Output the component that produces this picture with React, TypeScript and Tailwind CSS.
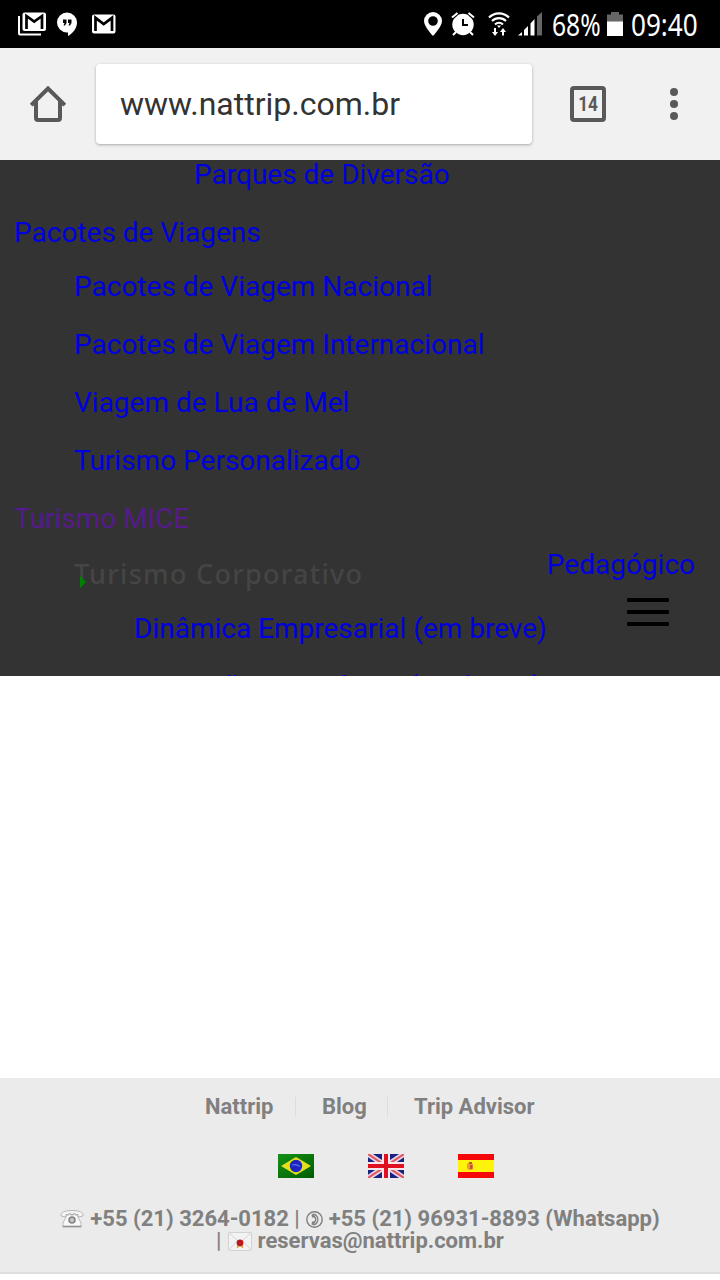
import React from 'react';

interface MenuRow {
  label: string;
  className: string;
}

const menuRows: MenuRow[] = [
  { label: 'Parques de Diversão', className: 'pl-[194px] h-[58px] -mt-[14px]' },
  { label: 'Pacotes de Viagens', className: 'pl-[14px] h-[58px]' },
  { label: 'Pacotes de Viagem Nacional', className: 'pl-[74px] h-[58px] -mt-1' },
  { label: 'Pacotes de Viagem Internacional', className: 'pl-[74px] h-[58px]' },
  { label: 'Viagem de Lua de Mel', className: 'pl-[74px] h-[58px]' },
  { label: 'Turismo Personalizado', className: 'pl-[74px] h-[58px]' },
  { label: 'Turismo MICE', className: 'pl-[14px] h-[58px] text-[#551a8b]' },
];

const StackedMailIcon = () => (
  <svg className="w-7 h-6" viewBox="0 0 28 24" fill="none">
    <path d="M1 4v17.500a1 1 0 0 0 1 1h21" stroke="#fff" strokeWidth="2" />
    <rect x="4.500" y=".5" width="23.500" height="18.500" rx="2" fill="#fff" />
    <path d="M8.500 17V4l7.700 5.500L24 4v13" stroke="#000" strokeWidth="2.700" />
  </svg>
);

const HangoutsIcon = () => (
  <svg className="w-5 h-6" viewBox="0 0 20 24">
    <path d="M10 .5a10 10 0 0 0 0 20h1V24c5-2.500 9-8 9-13.500A10 10 0 0 0 10 .5z" fill="#fff" />
    <path d="M6 7.500h3.500V11L8 13.500H6.500l1-2.500H6zM11 7.500h3.500V11L13 13.500h-1.500l1-2.500H11z" fill="#000" />
  </svg>
);

const MailIcon = () => (
  <svg className="w-6 h-5" viewBox="0 0 24 20" fill="none">
    <rect y=".5" width="23.500" height="19" rx="2" fill="#fff" />
    <path d="M3.500 17V3.800L11.700 10 20 3.800V17" stroke="#000" strokeWidth="2.700" />
  </svg>
);

const PinIcon = () => (
  <svg className="w-[18px] h-6" viewBox="0 0 18 24">
    <path fillRule="evenodd" d="M9 0a9 9 0 0 0-9 9c0 5.500 9 15 9 15s9-9.500 9-15a9 9 0 0 0-9-9zm0 4.200a4.800 4.800 0 1 1 0 9.600 4.800 4.800 0 0 1 0-9.600z" fill="#fff" />
  </svg>
);

const AlarmIcon = () => (
  <svg className="w-6 h-6" viewBox="0 0 24 24" fill="none">
    <circle cx="12" cy="12.500" r="10.700" fill="#fff" />
    <path d="M1 5.500l5.500-4.500M23 5.500L17.500 1M5 20l-3 3M19 20l3 3" stroke="#fff" strokeWidth="2" />
    <path d="M6.500 3.200L3 6M17.500 3.200L21 6" stroke="#000" strokeWidth="1" />
    <path d="M12 7v6h5" stroke="#000" strokeWidth="2" />
  </svg>
);

const WifiIcon = () => (
  <svg className="w-[22px] h-6" viewBox="0 0 22 24" fill="none">
    <path d="M1 5.500a14 14 0 0 1 20 0M4 9a10 10 0 0 1 14 0M7 12.500a6 6 0 0 1 8 0" stroke="#fff" strokeWidth="2.200" />
    <path d="M9 13.500h4L11 16zM6 16h2v4h2l-3 4-3-4h2zM14 23.500h2V20h2l-3-4-3 4h2z" fill="#fff" />
  </svg>
);

const SignalIcon = () => (
  <svg className="w-6 h-6" viewBox="0 0 24 24" fill="#fff">
    <path d="M0 23.500L4 20v3.500zM6 18l4-4v9.500H6zM12.500 11.500l4-4.500v16.500h-4z" />
    <path d="M19 4.500L24 0v23.500h-5z" fill="#666" />
  </svg>
);

const BatteryIcon = () => (
  <svg className="w-4 h-6" viewBox="0 0 16 24">
    <path d="M0 2.500h4V0h8v2.500h4V10H0z" fill="#666" />
    <path d="M0 9.500h16V24H0z" fill="#fff" />
  </svg>
);

const HomeIcon = () => (
  <svg className="w-9 h-9" viewBox="0 0 36 36" fill="none" stroke="#595959" strokeWidth="4">
    <path d="M1.200 19.200L18 2.500l16.800 16.700M6 15v17a2 2 0 0 0 2 2h20a2 2 0 0 0 2-2V15" />
  </svg>
);

const BrazilFlag = () => (
  <svg className="w-9 h-6" viewBox="0 0 36 24">
    <defs>
      <linearGradient id="br" x1="0" y1="0" x2="1" y2="1">
        <stop offset="0" stopColor="#169116" />
        <stop offset="1" stopColor="#005c00" />
      </linearGradient>
    </defs>
    <rect width="36" height="24" fill="url(#br)" />
    <path d="M3 12L18 3l15 9-15 9z" fill="#e6e01a" />
    <circle cx="18" cy="12" r="6.200" fill="#1c25c4" />
    <path d="M14 11c3-1 6 0 8 1.500" stroke="#5a76dc" strokeWidth="1.200" fill="none" />
  </svg>
);

const UkFlag = () => (
  <svg className="w-9 h-6" viewBox="0 0 36 24">
    <rect width="36" height="24" fill="#172283" />
    <path d="M0 0l36 24M36 0L0 24" stroke="#e9d5e2" strokeWidth="5.500" />
    <path d="M0 0l36 24M36 0L0 24" stroke="#e05461" strokeWidth="2" />
    <path d="M18 0v24M0 12h36" stroke="#f7e6ea" strokeWidth="8" />
    <path d="M18 0v24M0 12h36" stroke="#e01020" strokeWidth="4" />
  </svg>
);

const SpainFlag = () => (
  <svg className="w-9 h-6" viewBox="0 0 36 24">
    <rect width="36" height="24" fill="#f60808" />
    <rect y="6" width="36" height="12" fill="#fff30c" />
    <rect x="9" y="8.500" width="6" height="7.500" rx="2.500" fill="#eb9a36" />
    <path d="M11 8h3v2h-3zM12 11h2.500v4H12z" fill="#c0552a" />
  </svg>
);

const PhoneIcon = () => (
  <svg className="w-6 h-[18px]" viewBox="0 0 24 18">
    <path d="M1 6V4c1-2 5-3.500 11-3.500S22 2 23 4v2l-5 1V4.500H6V7z" fill="#f4f4f4" stroke="#aaa" strokeWidth=".8" />
    <path d="M7 5h2V3.500h1.500V5h3V3.500H15V5h2l4 8v3H3v-3z" fill="#f8f8f8" stroke="#aaa" strokeWidth=".8" />
    <path d="M2.500 16.700h19" stroke="#888" strokeWidth="1.200" />
    <circle cx="12" cy="10" r="3.800" fill="#888" />
    <circle cx="12" cy="10" r="2" fill="#ccc" />
  </svg>
);

const DialIcon = () => (
  <svg className="w-[17px] h-[17px]" viewBox="0 0 17 17">
    <circle cx="8.500" cy="8.500" r="7.700" fill="none" stroke="#808080" strokeWidth="1.400" />
    <path d="M5.500 3.500L8 2.500c6 1 6 11 0 12l-2.500-1 .5-3h1.500c2-.5 2-3.500 0-4H6z" fill="#808080" />
    <path d="M8.500 4.500c3 1.500 3 6.500 0 8" fill="none" stroke="#ebebeb" strokeWidth="1" />
  </svg>
);

const EnvelopeIcon = () => (
  <svg className="w-6 h-[19px]" viewBox="0 0 24 19">
    <rect x=".5" y=".5" width="23" height="18" rx="1" fill="#f3f3f3" stroke="#d2d2d2" />
    <path d="M1 1l11 9.500L23 1M1 18l8-9M23 18l-8-9" fill="none" stroke="#d4d4d4" />
    <path d="M9.500 12l-1 4 2-.5L12 14l1.500 1.500 2 .5-1-4z" fill="#e9a33a" />
    <circle cx="12" cy="10.800" r="3.400" fill="#bd1720" />
  </svg>
);

const App: React.FC = () => {
  return (
    <div className="w-[720px] h-[1280px] bg-white flex flex-col overflow-hidden font-['Roboto',sans-serif]">
      <div className="h-12 shrink-0 bg-black flex items-center text-white pl-[18px] pr-[21px]">
        <StackedMailIcon />
        <div className="ml-[11px]"><HangoutsIcon /></div>
        <div className="ml-[15px]"><MailIcon /></div>
        <div className="ml-auto flex items-center">
          <PinIcon />
          <div className="ml-[9px]"><AlarmIcon /></div>
          <div className="ml-[13px]"><WifiIcon /></div>
          <div className="ml-[8px]"><SignalIcon /></div>
          <span className="w-[49px] ml-[10px] pt-[2px] flex whitespace-nowrap font-['Noto_Sans'] text-[30px] leading-[46px]"><span className="origin-left scale-x-[0.82]">68%</span></span>
          <div className="ml-[6px]"><BatteryIcon /></div>
          <span className="w-[68px] ml-[8px] pt-[2px] flex whitespace-nowrap font-['Noto_Sans'] text-[30px] leading-[46px]"><span className="origin-left scale-x-[0.87]">09:40</span></span>
        </div>
      </div>

      <header className="h-28 shrink-0 bg-[#f1f1f1] flex items-center pl-[30px]">
        <HomeIcon />
        <div className="ml-[30px] w-[436px] h-20 bg-white rounded-[4px] shadow-[0_1px_3px_rgba(0,0,0,0.3)] flex items-center pl-6 text-[32px] text-[#333]">www.nattrip.com.br</div>
        <div className="ml-[38px] w-9 h-9 rounded-[4px] border-4 border-[#595959] text-[#595959] font-bold text-[21px] leading-none flex items-center justify-center"><span className="scale-x-[0.82]">14</span></div>
        <div className="ml-[64px] flex flex-col gap-1">
          <span className="w-2 h-2 rounded-full bg-[#595959]" />
          <span className="w-2 h-2 rounded-full bg-[#595959]" />
          <span className="w-2 h-2 rounded-full bg-[#595959]" />
        </div>
      </header>

      <nav className="relative h-[516px] shrink-0 bg-[#333] overflow-hidden text-[28px] text-[#0000dc] flex flex-col">
        {menuRows.map(row => (
          <a key={row.label} className={`shrink-0 flex items-center whitespace-nowrap ${row.className}`}>{row.label}</a>
        ))}
        <div className="relative h-[52px] shrink-0 pl-[74px] flex items-center font-['Noto_Sans'] font-medium text-[27px] tracking-[1.3px] text-[#454545]">
          Turismo Corporativo
          <svg className="absolute left-20 top-[28px] w-[6px] h-3" viewBox="0 0 6 12"><path d="M0 0l6 6-6 6z" fill="#008000" /></svg>
        </div>
        <a className="h-[58px] shrink-0 pl-[134px] flex items-center whitespace-nowrap">Dinâmica Empresarial (em breve)</a>
        <a className="h-[58px] shrink-0 pl-[128px] flex items-center whitespace-nowrap">Formação Estratégica (em breve)</a>

        <a className="absolute right-[25px] top-[376px] h-[58px] flex items-center">Pedagógico</a>
        <div className="absolute left-[627px] top-[438px] w-[42px] flex flex-col gap-2">
          <span className="h-1 rounded-[1px] bg-black" />
          <span className="h-1 rounded-[1px] bg-black" />
          <span className="h-1 rounded-[1px] bg-black" />
        </div>
      </nav>

      <main className="h-[402px] shrink-0 bg-white" />

      <footer className="h-[196px] shrink-0 bg-[#ebebeb] border-b-2 border-[#dedede] text-[22px] leading-[22px] font-bold text-[#808080]">
        <div className="flex items-center pl-[205px] pt-[18px]">
          <a className="w-[69px]">Nattrip</a>
          <span className="w-px h-5 bg-[#dcdcdc] ml-[21px] mr-[26px]" />
          <a className="w-[45px]">Blog</a>
          <span className="w-px h-5 bg-[#dcdcdc] ml-[20px] mr-[26px]" />
          <a>Trip Advisor</a>
        </div>
        <div className="flex gap-[54px] pl-[278px] mt-9">
          <BrazilFlag />
          <UkFlag />
          <SpainFlag />
        </div>
        <div className="mt-[30px] flex flex-col items-center whitespace-nowrap">
          <div className="h-[22px] flex items-center gap-[6px]">
            <PhoneIcon />
            <span>+55 (21) 3264-0182 <span className="font-medium">|</span></span>
            <DialIcon />
            <span>+55 (21) 96931-8893 (Whatsapp)</span>
          </div>
          <div className="h-[22px] flex items-center gap-[6px]">
            <span className="font-medium">|</span>
            <EnvelopeIcon />
            <span>reservas@nattrip.com.br</span>
          </div>
        </div>
      </footer>
    </div>
  );
};

export default App;
